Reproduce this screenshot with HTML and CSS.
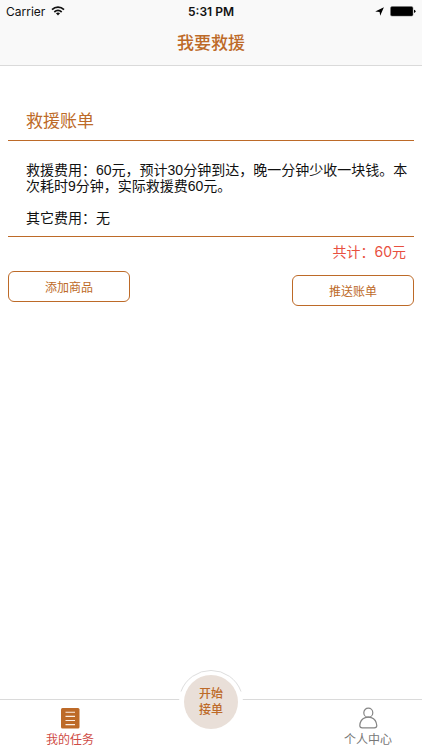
FILE: index.html
```html
<!DOCTYPE html>
<html lang="zh-CN">
<head>
<meta charset="utf-8">
<meta name="viewport" content="width=device-width, initial-scale=1">
<title>我要救援</title>
<link rel="stylesheet" href="styles.css">
</head>
<body>
<header class="header">
  <div class="status">
    <div class="status-left">
      <span>Carrier</span>
      <svg width="14" height="10" viewBox="0 0 14 10" aria-hidden="true">
        <g fill="none" stroke="#111" stroke-width="1.7">
          <path d="M1 3.7C4.4.3 9.6.3 13 3.7"/>
          <path d="M3.3 6C5.5 4 8.500 4 10.700 6"/>
        </g>
        <path d="M4.900 7.300Q7 5.700 9.100 7.300L7 9.600Z" fill="#111"/>
      </svg>
    </div>
    <time class="clock">5:31 PM</time>
    <div class="status-right">
      <svg width="9" height="9" viewBox="0 0 9 9" aria-hidden="true"><path d="M8.900.2L5.200 8.800L4.600 4.900L.2 4.500Z" fill="#000"/></svg>
      <svg width="26" height="11" viewBox="0 0 26 11" aria-hidden="true">
        <rect x=".5" y=".5" width="22.500" height="9.600" rx="1.500" fill="#000" stroke="#777" stroke-width=".5"/>
        <path d="M24 3.700Q25.500 4 25.500 5.300T24 6.900Z" fill="#000"/>
      </svg>
    </div>
  </div>
  <h1 class="title">我要救援</h1>
</header>

<main class="main">
  <section class="bill">
    <h2 class="bill-title">救援账单</h2>
    <div class="bill-body">
      <p>救援费用：60元，预计30分钟到达，晚一分钟少收一块钱。本次耗时9分钟，实际救援费60元。</p>
      <p>其它费用：无</p>
    </div>
    <p class="total">共计：60元</p>
  </section>
  <div class="actions">
    <button class="btn" type="button">添加商品</button>
    <button class="btn btn-push" type="button">推送账单</button>
  </div>
</main>

<nav class="tabs">
  <a class="tab tab-active" href="#tasks">
    <svg width="20" height="22" viewBox="0 0 20 22" aria-hidden="true">
      <rect x="1" y="1" width="18.500" height="20.500" rx="1.500" fill="#bd6a28"/>
      <path d="M5.500 5.300h9.500M5.500 9.400h9.500M5.500 13.500h9.500M5.500 17.600h9.500" stroke="#fbeee3" stroke-width="1.100"/>
    </svg>
    <span>我的任务</span>
  </a>
  <div class="start-slot">
    <button class="start" type="button">开始<br>接单</button>
    <svg class="start-arc" width="64" height="64" viewBox="0 0 64 64" aria-hidden="true">
      <path d="M2 21.500A31.900 31.900 0 0 1 62 21.500" fill="none" stroke="#dedede"/>
    </svg>
  </div>
  <a class="tab" href="#profile">
    <svg width="20" height="22" viewBox="0 0 20 22" aria-hidden="true">
      <g fill="none" stroke="#858585" stroke-width="1.200">
        <circle cx="10.300" cy="5.700" r="4.500"/>
        <path d="M7.300 10.600C4 11.800 2 14.600 1.800 18.500Q1.800 20.800 4.300 20.900H16.300Q18.800 20.800 18.800 18.500C18.500 14.600 16.500 11.800 13.300 10.600Q10.300 9.600 7.300 10.600"/>
      </g>
    </svg>
    <span>个人中心</span>
  </a>
</nav>
</body>
</html>
```
FILE: styles.css
```css
* {
  box-sizing: border-box;
}

body {
  margin: 0;
  min-height: 100vh;
  display: flex;
  flex-direction: column;
  background: #fff;
  color: #111;
  font-family: Inter, "Noto Sans CJK SC", sans-serif;
  font-size: 14px;
}

h1, h2, p {
  margin: 0;
  font-weight: 400;
}

button {
  font-family: inherit;
  font-size: 12px;
  color: #bd6a28;
  cursor: pointer;
}

.header {
  background: #f9f9f9;
  border-bottom: 1px solid #dadada;
}

.status {
  display: grid;
  grid-template-columns: 1fr auto 1fr;
  align-items: center;
  height: 22px;
  padding: 0 6px;
  font-size: 12px;
}

.status-left,
.status-right {
  display: flex;
  align-items: center;
  gap: 6px;
}

.status-right {
  justify-content: flex-end;
}

.clock {
  font-weight: 600;
}

.title {
  height: 43px;
  line-height: 42px;
  text-align: center;
  font-size: 17px;
  font-weight: 500;
  color: #bd6a28;
}

.main {
  flex: 1;
  padding: 36px 8px 0;
}

.bill-title {
  padding: 0 18px;
  line-height: 38px;
  font-size: 17px;
  color: #bd6a28;
  border-bottom: 1px solid #bd6a28;
}

.bill-body {
  display: grid;
  gap: 16px;
  padding: 21px 0 10px 18px;
  font-family: "Liberation Sans", "Noto Sans CJK SC", sans-serif;
  line-height: 16px;
  border-bottom: 1px solid #bd6a28;
}

.total {
  padding-right: 8px;
  line-height: 30px;
  text-align: right;
  color: #e8503f;
}

.actions {
  display: flex;
  justify-content: space-between;
  align-items: flex-start;
  padding-top: 4px;
}

.btn {
  width: 30%;
  height: 31px;
  padding: 0;
  background: #fff;
  border: 1px solid #bd6a28;
  border-radius: 6px;
}

.btn-push {
  margin-top: 4px;
}

.tabs {
  display: grid;
  grid-template-columns: 1fr 64px 1fr;
  height: 51px;
  border-top: 1px solid #dadada;
}

.tab {
  display: flex;
  flex-direction: column;
  align-items: center;
  width: 140px;
  padding-top: 7px;
  font-size: 12px;
  line-height: 22px;
  color: #777;
  text-decoration: none;
}

.tab:last-child {
  justify-self: end;
  width: 108px;
}

.tab-active {
  color: #cf4c46;
}

.start-slot {
  position: relative;
  height: 64px;
  margin-top: -30px;
  padding: 5px;
  background: #fff;
  border-radius: 50%;
}

.start {
  width: 54px;
  height: 54px;
  padding: 0;
  line-height: 16px;
  font-weight: 500;
  background: #e9dfd8;
  border: 0;
  border-radius: 50%;
}

.start-arc {
  position: absolute;
  inset: 0;
  pointer-events: none;
}
```
